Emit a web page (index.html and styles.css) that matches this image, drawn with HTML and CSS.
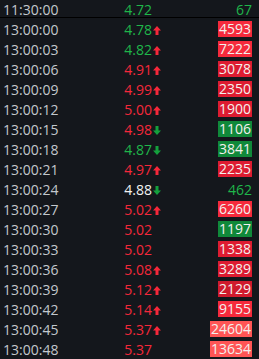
FILE: index.html
```html
<!DOCTYPE html>
<html>
<head>
<meta charset="utf-8">
<link rel="stylesheet" href="styles.css">
</head>
<body>
<div class="tape">
  <div class="row head"><span class="t">11:30:00</span><span class="p g">4.72</span><span class="a"></span><span class="v"><span class="vt g">67</span></span></div>
  <div class="row"><span class="t">13:00:00</span><span class="p g">4.78</span><span class="a"><svg class="up" viewBox="0 0 8 9"><polygon points="4,0 8,4.5 5.5,4.5 5.5,9 2.5,9 2.5,4.5 0,4.5"/></svg></span><span class="v"><span class="box r1">4593</span></span></div>
  <div class="row"><span class="t">13:00:03</span><span class="p g">4.82</span><span class="a"><svg class="up" viewBox="0 0 8 9"><polygon points="4,0 8,4.5 5.5,4.5 5.5,9 2.5,9 2.5,4.5 0,4.5"/></svg></span><span class="v"><span class="box r1">7222</span></span></div>
  <div class="row"><span class="t">13:00:06</span><span class="p r">4.91</span><span class="a"><svg class="up" viewBox="0 0 8 9"><polygon points="4,0 8,4.5 5.5,4.5 5.5,9 2.5,9 2.5,4.5 0,4.5"/></svg></span><span class="v"><span class="box r2">3078</span></span></div>
  <div class="row"><span class="t">13:00:09</span><span class="p r">4.99</span><span class="a"><svg class="up" viewBox="0 0 8 9"><polygon points="4,0 8,4.5 5.5,4.5 5.5,9 2.5,9 2.5,4.5 0,4.5"/></svg></span><span class="v"><span class="box r2">2350</span></span></div>
  <div class="row"><span class="t">13:00:12</span><span class="p r">5.00</span><span class="a"><svg class="up" viewBox="0 0 8 9"><polygon points="4,0 8,4.5 5.5,4.5 5.5,9 2.5,9 2.5,4.5 0,4.5"/></svg></span><span class="v"><span class="box r2">1900</span></span></div>
  <div class="row"><span class="t">13:00:15</span><span class="p r">4.98</span><span class="a"><svg class="dn" viewBox="0 0 8 9"><polygon points="4,9 8,4.5 5.5,4.5 5.5,0 2.5,0 2.5,4.5 0,4.5"/></svg></span><span class="v"><span class="box gb">1106</span></span></div>
  <div class="row"><span class="t">13:00:18</span><span class="p g">4.87</span><span class="a"><svg class="dn" viewBox="0 0 8 9"><polygon points="4,9 8,4.5 5.5,4.5 5.5,0 2.5,0 2.5,4.5 0,4.5"/></svg></span><span class="v"><span class="box gb">3841</span></span></div>
  <div class="row"><span class="t">13:00:21</span><span class="p r">4.97</span><span class="a"><svg class="up" viewBox="0 0 8 9"><polygon points="4,0 8,4.5 5.5,4.5 5.5,9 2.5,9 2.5,4.5 0,4.5"/></svg></span><span class="v"><span class="box r2">2235</span></span></div>
  <div class="row"><span class="t">13:00:24</span><span class="p w">4.88</span><span class="a"><svg class="dn" viewBox="0 0 8 9"><polygon points="4,9 8,4.5 5.5,4.5 5.5,0 2.5,0 2.5,4.5 0,4.5"/></svg></span><span class="v"><span class="vt g">462</span></span></div>
  <div class="row"><span class="t">13:00:27</span><span class="p r">5.02</span><span class="a"><svg class="up" viewBox="0 0 8 9"><polygon points="4,0 8,4.5 5.5,4.5 5.5,9 2.5,9 2.5,4.5 0,4.5"/></svg></span><span class="v"><span class="box r1">6260</span></span></div>
  <div class="row"><span class="t">13:00:30</span><span class="p r">5.02</span><span class="a"></span><span class="v"><span class="box gb">1197</span></span></div>
  <div class="row"><span class="t">13:00:33</span><span class="p r">5.02</span><span class="a"></span><span class="v"><span class="box r2">1338</span></span></div>
  <div class="row"><span class="t">13:00:36</span><span class="p r">5.08</span><span class="a"><svg class="up" viewBox="0 0 8 9"><polygon points="4,0 8,4.5 5.5,4.5 5.5,9 2.5,9 2.5,4.5 0,4.5"/></svg></span><span class="v"><span class="box r2">3289</span></span></div>
  <div class="row"><span class="t">13:00:39</span><span class="p r">5.12</span><span class="a"><svg class="up" viewBox="0 0 8 9"><polygon points="4,0 8,4.5 5.5,4.5 5.5,9 2.5,9 2.5,4.5 0,4.5"/></svg></span><span class="v"><span class="box r3">2129</span></span></div>
  <div class="row"><span class="t">13:00:42</span><span class="p r">5.14</span><span class="a"><svg class="up" viewBox="0 0 8 9"><polygon points="4,0 8,4.5 5.5,4.5 5.5,9 2.5,9 2.5,4.5 0,4.5"/></svg></span><span class="v"><span class="box r1">9155</span></span></div>
  <div class="row"><span class="t">13:00:45</span><span class="p r">5.37</span><span class="a"><svg class="up" viewBox="0 0 8 9"><polygon points="4,0 8,4.5 5.5,4.5 5.5,9 2.5,9 2.5,4.5 0,4.5"/></svg></span><span class="v"><span class="box r4">24604</span></span></div>
  <div class="row"><span class="t">13:00:48</span><span class="p r">5.37</span><span class="a"></span><span class="v"><span class="box r4">13634</span></span></div>
</div>
</body>
</html>
```

FILE: styles.css
```css
html, body {
  margin: 0;
  padding: 0;
  background: #14171c;
}
.tape {
  width: 259px;
  height: 359px;
  overflow: hidden;
  font-family: "Open Sans", sans-serif;
  font-size: 14px;
  color: #c3c8cd;
}
.row {
  display: grid;
  grid-template-columns: 70px 79px 10px 1fr;
  padding: 0 7px 0 3px;
  height: 20px;
  line-height: 20px;
}
.row.head {
  height: 17px;
  border-bottom: 1px solid #000;
  margin-bottom: 2px;
}
.t { white-space: nowrap; }
.p { text-align: right; }
.a { display: flex; align-items: center; padding-left: 1px; }
.a svg { width: 8px; height: 9px; display: block; }
.up { fill: #f5283a; }
.dn { fill: #14a03c; }
.v { display: flex; justify-content: flex-end; align-items: flex-start; }
.g { color: #1fb64a; }
.r { color: #f5283a; }
.w { color: #f2f2f2; }
.box {
  margin-top: 1px;
  height: 16px;
  line-height: 16px;
  padding: 0 1px;
  color: #f4f0ee;
}
.r1 { background: #f52a3c; }
.r2 { background: #dd1c31; }
.r3 { background: #cf1a2d; }
.r4 { background: #ff5555; }
.gb { background: #10893a; }
```
